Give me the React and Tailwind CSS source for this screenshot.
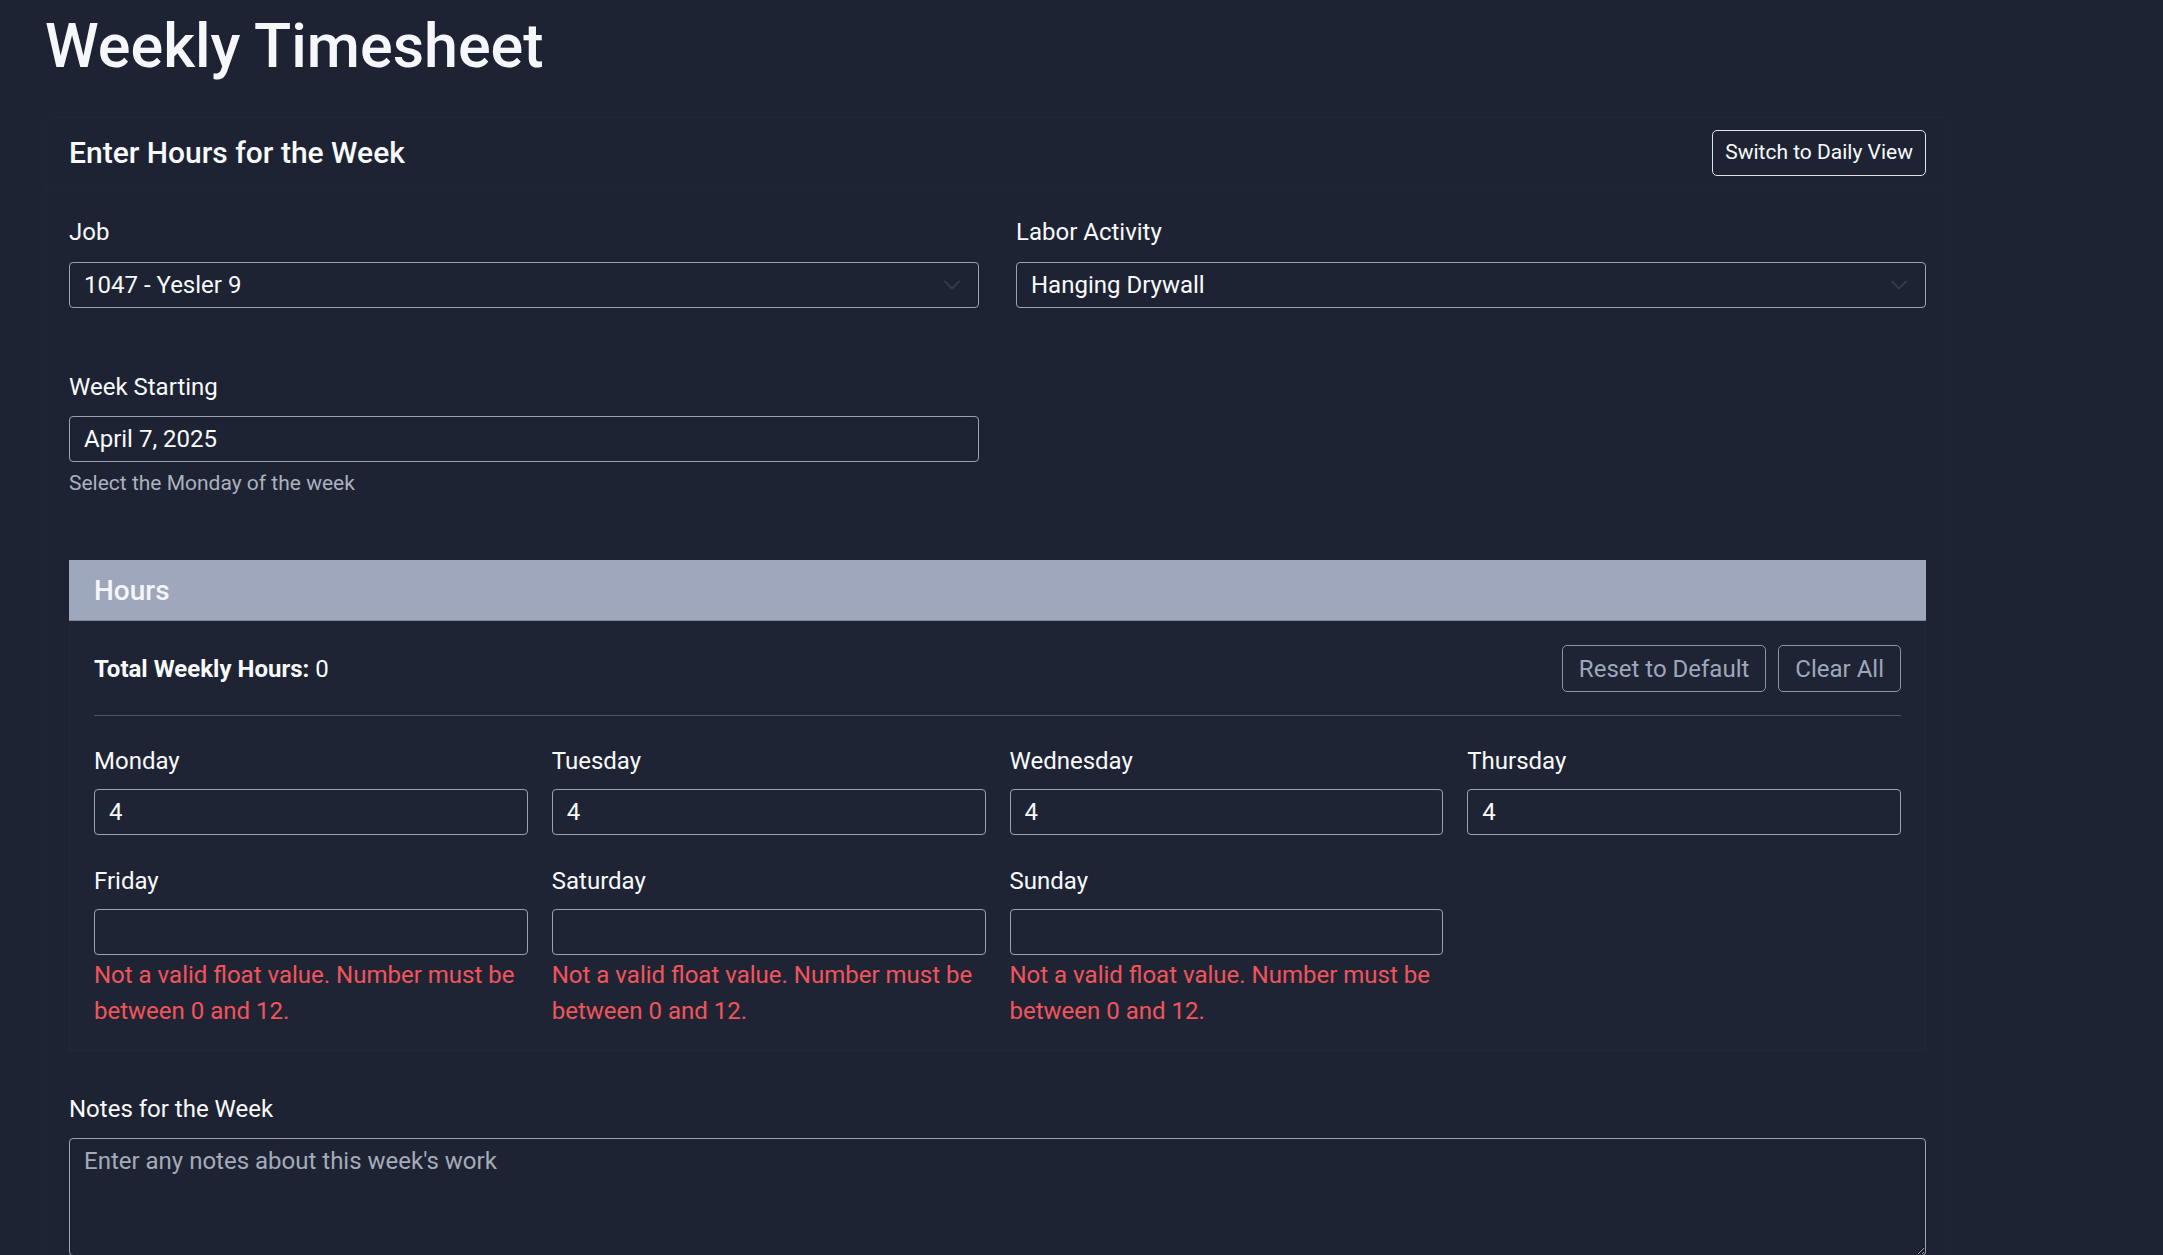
import { useState } from 'react';

const DAYS = [
  { name: 'Monday', value: '4' },
  { name: 'Tuesday', value: '4' },
  { name: 'Wednesday', value: '4' },
  { name: 'Thursday', value: '4' },
  { name: 'Friday', value: '', error: true },
  { name: 'Saturday', value: '', error: true },
  { name: 'Sunday', value: '', error: true },
];

const inputClass =
  'w-full h-[46px] bg-transparent border border-[#9aa2b3] rounded-[4px] px-[14px] text-[24px] leading-9 text-[#f8fafc] outline-none placeholder:text-[#a4abb9]';

const ChevronDown = () => (
  <svg
    className="pointer-events-none absolute right-[19px] top-1/2 -translate-y-1/2"
    width="16"
    height="9"
    viewBox="0 0 16 9"
    fill="none"
  >
    <polyline points="1,1 8,8 15,1" stroke="#343a4b" strokeWidth="2" strokeLinecap="round" strokeLinejoin="round" />
  </svg>
);

const SelectField = ({ label, options }) => (
  <div>
    <label className="block text-[24px] leading-9 mb-3">{label}</label>
    <div className="relative">
      <select className={`${inputClass} appearance-none pr-12`} defaultValue={options[0]}>
        {options.map((opt) => (
          <option key={opt} value={opt} className="bg-[#1e2333]">
            {opt}
          </option>
        ))}
      </select>
      <ChevronDown />
    </div>
  </div>
);

const App = () => {
  const [hours, setHours] = useState(() => DAYS.map((d) => d.value));

  return (
    <div className="min-h-screen bg-[#1e2333] text-[#f8fafc] font-[Roboto,sans-serif]">
      <div className="w-[1995px] px-[45px] pt-[10px]">
        <h1 className="text-[61px] leading-[72px] font-medium text-[#f5f7fa]">Weekly Timesheet</h1>

        <div className="mt-[35px] border border-[#212636] rounded-[6px]">
          {/* Card header */}
          <div className="flex items-center justify-between px-[23px] py-3 border-b border-[#212636]">
            <h2 className="text-[30px] leading-9 font-medium">Enter Hours for the Week</h2>
            <button className="h-[46px] px-3 border border-[#dfe3ea] rounded-[5px] text-[21px] text-[#f8fafc]">
              Switch to Daily View
            </button>
          </div>

          {/* Card body */}
          <div className="px-[23px] pt-[25px]">
            <div className="grid grid-cols-2 gap-x-[37px] gap-y-[61px]">
              <SelectField label="Job" options={['1047 - Yesler 9']} />
              <SelectField label="Labor Activity" options={['Hanging Drywall']} />
              <div>
                <label className="block text-[24px] leading-9 mb-[11px]">Week Starting</label>
                <input className={inputClass} type="text" defaultValue="April 7, 2025" />
                <p className="mt-[6px] text-[21px] leading-[31px] text-[#aab1bf]">Select the Monday of the week</p>
              </div>
            </div>

            {/* Hours card */}
            <div className="mt-[61px]">
              <div className="h-[61px] bg-[#9ea7bb] border-b border-[#7f889c] px-[25px] pt-[14px]">
                <h3 className="text-[28px] leading-[34px] font-medium text-[#f4f6f9]">Hours</h3>
              </div>
              <div className="border border-t-0 border-[#222737] bg-[#1f2434] px-6 pt-6 pb-[21px]">
                <div className="flex items-center justify-between pb-[23px] border-b border-[#4b5263]">
                  <div className="text-[24px] leading-9">
                    <span className="font-bold">Total Weekly Hours:</span> 0
                  </div>
                  <div className="flex gap-3">
                    <button className="h-[47px] px-4 border border-[#8b93a5] rounded-[5px] text-[24px] text-[#9ea7bb]">
                      Reset to Default
                    </button>
                    <button className="h-[47px] px-4 border border-[#8b93a5] rounded-[5px] text-[24px] text-[#9ea7bb]">
                      Clear All
                    </button>
                  </div>
                </div>

                <div className="mt-[27px] grid grid-cols-4 gap-x-6 gap-y-[28px]">
                  {DAYS.map((day, i) => (
                    <div key={day.name}>
                      <label className="block text-[24px] leading-9 mb-[10px]">{day.name}</label>
                      <input
                        className={inputClass}
                        type="text"
                        value={hours[i]}
                        onChange={(e) => {
                          const next = [...hours];
                          next[i] = e.target.value;
                          setHours(next);
                        }}
                      />
                      {day.error && (
                        <p className="mt-[2px] text-[24px] leading-9 text-[#f2545b]">
                          Not a valid float value. Number must be between 0 and 12.
                        </p>
                      )}
                    </div>
                  ))}
                </div>
              </div>
            </div>

            {/* Notes */}
            <div className="mt-[40px]">
              <label className="block text-[24px] leading-9 mb-[11px]">Notes for the Week</label>
              <textarea
                className={`${inputClass} h-[118px] py-1 resize-y`}
                placeholder="Enter any notes about this week's work"
              />
            </div>
          </div>
        </div>
      </div>
    </div>
  );
};

export default App;
